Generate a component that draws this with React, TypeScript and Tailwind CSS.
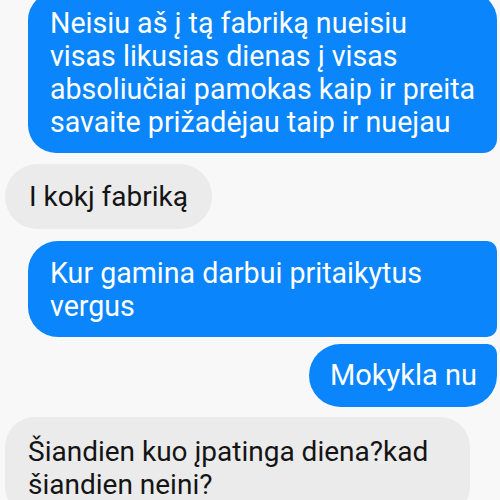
const blue = "bg-[#0a85fb] text-white text-[28.6px] leading-[33px]";
const gray = "bg-[#ebebeb] text-[#141414]";

export default function App() {
  return (
    <div className="h-[500px] w-[500px] overflow-hidden bg-[#f8f8f8] font-['Roboto',sans-serif] text-[28px] leading-[33px]">
      <div className="flex flex-col">
        <div className="flex justify-end pr-[3px]">
          <div className={`mt-[-8px] w-[469px] whitespace-nowrap rounded-[28px] rounded-br-[14px] pl-[22px] pr-[14px] pt-[15px] pb-[14px] ${blue}`}>
            Neisiu aš į tą fabriką nueisiu
            <br />
            visas likusias dienas į visas
            <br />
            absoliučiai pamokas kaip ir preita
            <br />
            savaite prižadėjau taip ir nuejau
          </div>
        </div>

        <div className="mt-[11px] flex justify-start pl-[5px]">
          <div className={`rounded-[33px] px-[24px] py-[16px] ${gray}`}>I kokj fabriką</div>
        </div>

        <div className="mt-[12px] flex justify-end pr-[3px]">
          <div className={`w-[469px] rounded-[30px] rounded-tr-[10px] rounded-br-[10px] pl-[22px] pr-[14px] pt-[16px] pb-[14px] ${blue}`}>
            Kur gamina darbui pritaikytus vergus
          </div>
        </div>

        <div className="mt-[7px] flex justify-end pr-[3px]">
          <div className={`rounded-[32px] rounded-tr-[10px] pl-[21px] pr-[20px] py-[15px] !text-[29px] ${blue}`}>Mokykla nu</div>
        </div>

        <div className="mt-[10px] flex justify-start pl-[5px]">
          <div className={`w-[465px] rounded-[30px] px-[23px] pt-[18px] pb-[16px] ${gray}`}>
            Šiandien kuo įpatinga diena?kad šiandien neini?
          </div>
        </div>
      </div>
    </div>
  );
}
